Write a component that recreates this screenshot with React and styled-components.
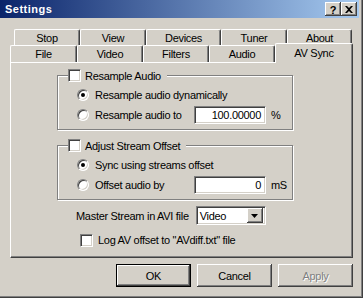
import React from "react";
import styled, { createGlobalStyle } from "styled-components";

const GlobalStyle = createGlobalStyle`
  html, body {
    margin: 0;
    padding: 0;
    background: #d4d0c8;
  }
  body {
    font-family: "Liberation Sans", Arial, sans-serif;
    font-size: 11px;
    letter-spacing: -0.3px;
    color: #000;
  }
  * { box-sizing: border-box; }
`;

const rowsBack = [
  { label: "Stop", w: 66 },
  { label: "View", w: 66 },
  { label: "Devices", w: 75 },
  { label: "Tuner", w: 66 },
  { label: "About", w: 65 },
];

const rowsFront = [
  { label: "File", w: 67 },
  { label: "Video", w: 66 },
  { label: "Filters", w: 66 },
  { label: "Audio", w: 66 },
  { label: "AV Sync", w: 78, selected: true },
];

const App = () => {
  return (
    <>
      <GlobalStyle />
      <Window>
        <TitleBar>
          <Title>Settings</Title>
          <CaptionButtons>
            <CaptionButton>?</CaptionButton>
            <CaptionButton>
              <svg width="8" height="7" viewBox="0 0 8 7">
                <path d="M0 0h2l2 2 2-2h2L5 3.5 8 7H6L4 5 2 7H0l3-3.5z" fill="#000" />
              </svg>
            </CaptionButton>
          </CaptionButtons>
        </TitleBar>

        <Body>
          <TabRow $indent={4} $height={16}>
            {rowsBack.map((t) => (
              <Tab key={t.label} $w={t.w}>{t.label}</Tab>
            ))}
          </TabRow>
          <TabRow $indent={0} $height={17}>
            {rowsFront.map((t) => (
              <Tab key={t.label} $w={t.w} $selected={t.selected}>{t.label}</Tab>
            ))}
          </TabRow>

          <Panel>
            <GroupBox>
              <Legend>
                <CheckBox />
                <span>Resample Audio</span>
              </Legend>
              <OptionRow>
                <Radio $checked />
                <span>Resample audio dynamically</span>
              </OptionRow>
              <OptionRow>
                <Radio />
                <OptionLabel>Resample audio to</OptionLabel>
                <Edit $w={72}>100.00000</Edit>
                <Unit>%</Unit>
              </OptionRow>
            </GroupBox>

            <GroupBox $gap={9}>
              <Legend>
                <CheckBox />
                <span>Adjust Stream Offset</span>
              </Legend>
              <OptionRow>
                <Radio $checked />
                <span>Sync using streams offset</span>
              </OptionRow>
              <OptionRow>
                <Radio />
                <OptionLabel>Offset audio by</OptionLabel>
                <Edit $w={72}>0</Edit>
                <Unit>mS</Unit>
              </OptionRow>
            </GroupBox>

            <MasterRow>
              <span>Master Stream in AVI file</span>
              <Combo>
                <ComboText>Video</ComboText>
                <DropButton>
                  <svg width="7" height="4" viewBox="0 0 7 4">
                    <path d="M0 0h7L3.5 4z" fill="#000" />
                  </svg>
                </DropButton>
              </Combo>
            </MasterRow>

            <LogRow>
              <CheckBox />
              <span>Log AV offset to "AVdiff.txt" file</span>
            </LogRow>
          </Panel>

          <ButtonBar>
            <PushButton $default>OK</PushButton>
            <PushButton>Cancel</PushButton>
            <PushButton $disabled>Apply</PushButton>
          </ButtonBar>
        </Body>
      </Window>
    </>
  );
};

export default App;

const raised = `
  inset -1px -1px 0 #404040, inset 1px 1px 0 #fff, inset -2px -2px 0 #808080
`;

const sunken = `
  border: 1px solid;
  border-color: #808080 #fff #fff #808080;
  box-shadow: inset 1px 1px 0 #404040, inset -1px -1px 0 #d4d0c8;
`;

const Window = styled.div`
  width: 363px;
  height: 298px;
  display: flex;
  flex-direction: column;
  background: #d4d0c8;
  padding: 0 4px 4px 0;
  box-shadow: inset -1px -1px 0 #404040, inset -2px -2px 0 #808080;
`;

const TitleBar = styled.div`
  height: 18px;
  display: flex;
  align-items: center;
  padding-left: 5px;
  background: linear-gradient(to right, #0a246a, #a6caf0);
`;

const Title = styled.span`
  color: #fff;
  font-weight: bold;
  font-size: 11px;
  letter-spacing: 0.5px;
`;

const CaptionButtons = styled.div`
  margin-left: auto;
  margin-right: 2px;
  display: flex;
`;

const CaptionButton = styled.div`
  width: 16px;
  height: 14px;
  display: flex;
  align-items: center;
  justify-content: center;
  background: #d4d0c8;
  font-weight: bold;
  font-size: 11px;
  letter-spacing: 0;
  padding-top: 1px;
  box-shadow: ${raised};
`;

const Body = styled.div`
  flex: 1;
  display: flex;
  flex-direction: column;
  padding: 11px 6px 0 10px;
`;

const TabRow = styled.div`
  display: flex;
  height: ${(p) => p.$height}px;
  padding-left: ${(p) => p.$indent}px;
`;

const Tab = styled.div`
  position: relative;
  width: ${(p) => p.$w}px;
  height: ${(p) => (p.$selected ? 20 : 18)}px;
  margin-top: ${(p) => (p.$selected ? -2 : 0)}px;
  z-index: ${(p) => (p.$selected ? 2 : 0)};
  display: flex;
  justify-content: center;
  padding-top: ${(p) => (p.$selected ? 3 : 2)}px;
  background: #d4d0c8;
  border-left: 1px solid #fff;
  border-top: 1px solid #fff;
  border-right: 1px solid #404040;
  border-radius: 2px 2px 0 0;
  box-shadow: inset -1px 0 0 #808080;
`;

const Panel = styled.div`
  position: relative;
  z-index: 1;
  width: 343px;
  height: 196px;
  display: flex;
  flex-direction: column;
  align-items: flex-start;
  padding: 6px 0 0 46px;
  border-top: 1px solid #fff;
  border-left: 1px solid #fff;
  border-right: 1px solid #404040;
  border-bottom: 1px solid #404040;
  box-shadow: inset -1px -1px 0 #808080;
`;

const GroupBox = styled.fieldset`
  width: 236px;
  min-width: 0;
  margin: ${(p) => p.$gap || 0}px 0 0 0;
  padding: 3px 0 4px 19px;
  border: 1px solid #808080;
  box-shadow: inset 1px 1px 0 #fff, 1px 1px 0 #fff;
`;

const Legend = styled.legend`
  display: flex;
  align-items: center;
  gap: 4px;
  height: 13px;
  margin-left: -9px;
  padding: 0 6px 0 0;
  background: #d4d0c8;
`;

const CheckBox = styled.span`
  display: inline-block;
  flex: none;
  width: 13px;
  height: 13px;
  background: #fff;
  ${sunken}
`;

const OptionRow = styled.div`
  display: flex;
  align-items: center;
  height: 20px;
  gap: 6px;
`;

const Radio = styled.span`
  position: relative;
  flex: none;
  width: 12px;
  height: 12px;
  border-radius: 50%;
  background: #fff;
  ${sunken}

  &::after {
    content: "";
    display: ${(p) => (p.$checked ? "block" : "none")};
    position: absolute;
    left: 3px;
    top: 3px;
    width: 4px;
    height: 4px;
    border-radius: 50%;
    background: #000;
  }
`;

const OptionLabel = styled.span`
  width: 93px;
`;

const Edit = styled.div`
  width: ${(p) => p.$w}px;
  height: 18px;
  display: flex;
  align-items: center;
  justify-content: flex-end;
  padding-right: 4px;
  background: #fff;
  ${sunken}
`;

const Unit = styled.span`
  margin-left: -1px;
`;

const MasterRow = styled.div`
  display: flex;
  align-items: center;
  gap: 7px;
  height: 19px;
  margin: 6px 0 0 19px;
`;

const Combo = styled.div`
  width: 70px;
  height: 19px;
  display: flex;
  align-items: center;
  padding: 2px;
  background: #fff;
  ${sunken}
`;

const ComboText = styled.span`
  flex: 1;
  padding-left: 1px;
`;

const DropButton = styled.div`
  width: 16px;
  height: 15px;
  display: flex;
  align-items: center;
  justify-content: center;
  background: #d4d0c8;
  box-shadow: ${raised};
`;

const LogRow = styled.div`
  display: flex;
  align-items: center;
  gap: 5px;
  height: 14px;
  margin: 8px 0 0 23px;
`;

const ButtonBar = styled.div`
  display: flex;
  justify-content: flex-end;
  gap: 6px;
  margin-top: 6px;
`;

const PushButton = styled.div`
  width: 75px;
  height: 23px;
  display: flex;
  align-items: center;
  justify-content: center;
  background: #d4d0c8;
  color: ${(p) => (p.$disabled ? "#808080" : "#000")};
  text-shadow: ${(p) => (p.$disabled ? "1px 1px 0 #fff" : "none")};
  border: ${(p) => (p.$default ? "1px solid #000" : "none")};
  box-shadow: ${raised};
`;
